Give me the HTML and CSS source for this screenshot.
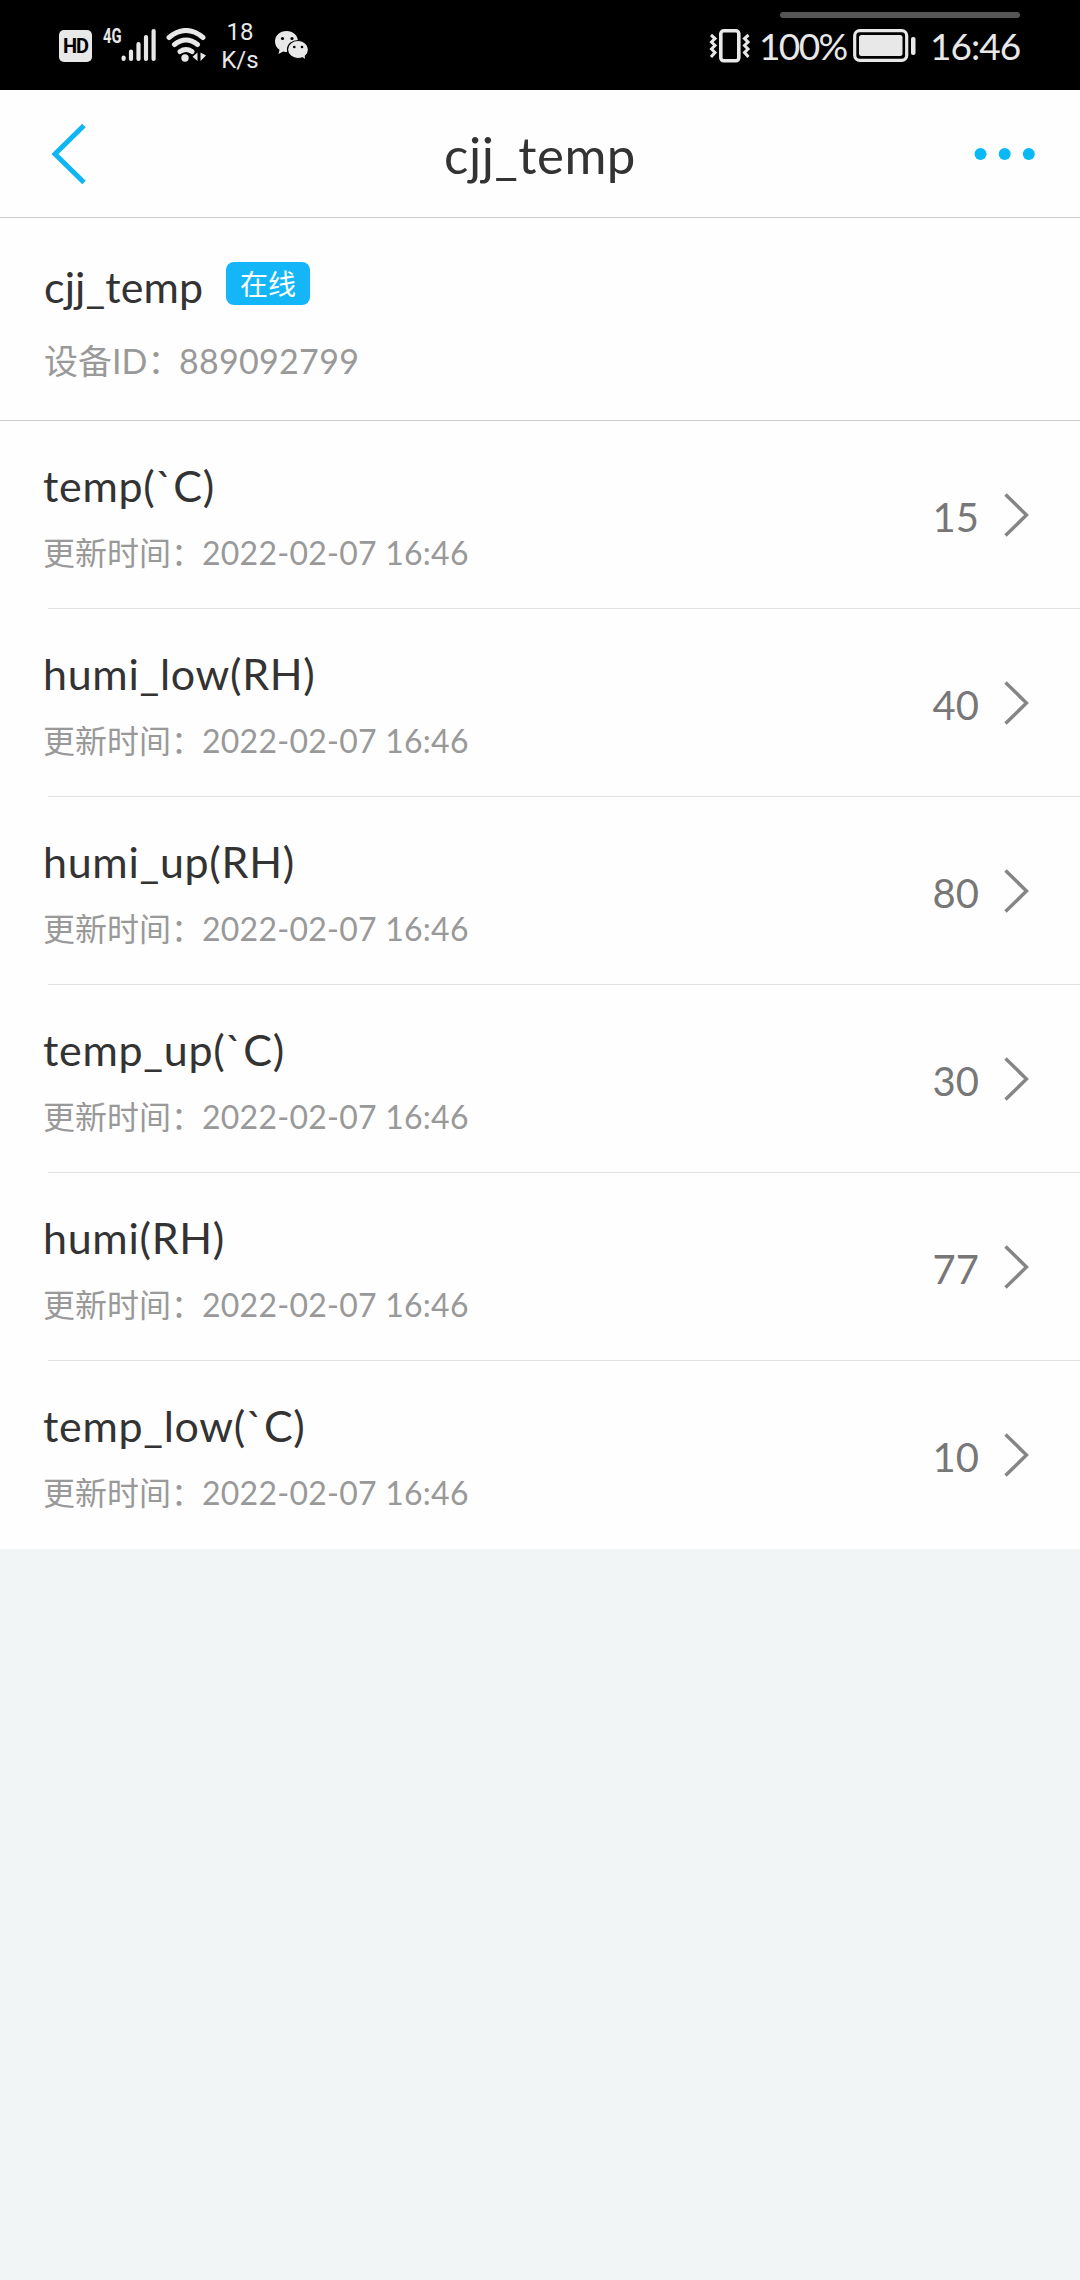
FILE: index.html
```html
<!DOCTYPE html>
<html lang="zh-CN">
<head>
<meta charset="utf-8">
<title>cjj_temp</title>
<link rel="stylesheet" href="styles.css">
</head>
<body>
<svg width="0" height="0" class="defs">
  <symbol id="chevron" viewBox="0 0 26 46"><path d="M2.500 2.500 23.500 23 2.500 43.500" fill="none" stroke="#858587" stroke-width="3.400"/></symbol>
</svg>
<div class="status">
  <div class="status-handle"></div>
  <div class="status-left">
    <span class="hd">HD</span>
    <span class="net">4G</span>
    <svg class="signal" width="36" height="34" viewBox="0 0 36 34" stroke="#e8e8e8" stroke-width="4.200" stroke-linecap="round"><path d="M2.600 29.500V31M10 23.500V31M17.500 16V31M25 9V31M32.600 3V31"/></svg>
    <svg class="wifi" width="42" height="36" viewBox="0 0 42 36"><g fill="none" stroke="#e8e8e8" stroke-width="5" stroke-linecap="round"><path d="M3 9.500Q20 -4.500 37 9.500M8.500 16.500Q20 7.500 31.500 16.500M14 23.500Q20 19.500 26 23.500"/></g><circle cx="19" cy="30" r="3.700" fill="#e8e8e8"/><path d="M31.500 24.500V33L26.500 28.800ZM34.500 24.500V33L40 27.500Z" fill="#e8e8e8"/></svg>
    <span class="speed">18<br>K/s</span>
    <svg class="wechat" width="34" height="30" viewBox="0 0 34 30"><path d="M11.500 0C5 0 0 4.600 0 10.500 0 14 1.700 16.800 4.500 18.800L3.500 23 8.200 20.500Q10 21 12 21C18 21 23 16.500 23 10.500 23 4.500 18 0 11.500 0Z" fill="#e8e8e8"/><path d="M23 9.500C17.500 9.500 12.500 13 12.500 18.500S17.500 27.500 23 27.500Q25.500 27.500 27.500 26.800L31 29 30.300 25.200C32.300 23.500 33.500 21 33.500 18.500 33.500 13 28.500 9.500 23 9.500Z" fill="#e8e8e8" stroke="#000" stroke-width="1.200"/><g><circle cx="7.500" cy="7.500" r="1.600"/><circle cx="17" cy="7.500" r="1.600"/><circle cx="19.300" cy="16" r="1.300"/><circle cx="27" cy="16" r="1.300"/></g></svg>
  </div>
  <div class="status-right">
    <svg class="vibrate" width="42" height="34" viewBox="0 0 42 34" fill="none" stroke="#e8e8e8"><rect x="11.800" y="1.800" width="18" height="30" rx="3" stroke-width="3.600"/><path d="M2 6 6 9.500 2.500 13 6 16.500 2.500 20 6 23.500 2 28M39.500 6 35.500 9.500 39 13 35.500 16.500 39 20 35.500 23.500 39.500 28" stroke-width="3"/></svg>
    <span class="percent">100%</span>
    <svg class="battery" width="64" height="34" viewBox="0 0 64 34"><rect x="1.700" y="1.700" width="52" height="29.600" rx="5" fill="none" stroke="#e8e8e8" stroke-width="3.200"/><rect x="6" y="6" width="43.500" height="21" rx="2.500" fill="#e8e8e8"/><rect x="58" y="8" width="4.500" height="18" rx="2" fill="#e8e8e8"/></svg>
    <span class="clock">16:46</span>
  </div>
</div>

<header class="nav">
  <svg width="36" height="62" viewBox="0 0 36 62"><path d="M33 2.500 4 31 33 59.500" fill="none" stroke="#10b6f3" stroke-width="5"/></svg>
  <h1>cjj_temp</h1>
  <svg width="62" height="12" viewBox="0 0 62 12" fill="#08b9f6"><circle cx="6.500" cy="6" r="6"/><circle cx="30.700" cy="6" r="6"/><circle cx="54.800" cy="6" r="6"/></svg>
</header>

<section class="device">
  <div class="device-head"><span class="device-name">cjj_temp</span><span class="badge">在线</span></div>
  <div class="device-id"><span class="id-label">设备ID：</span><span class="id-num">889092799</span></div>
</section>

<main class="list">
  <div class="row"><div class="info"><div class="name">temp(`C)</div><div class="time"><span class="label">更新时间：</span><span class="date">2022-02-07 16:46</span></div></div><span class="value">15</span><svg class="chev"><use href="#chevron"/></svg></div>
  <div class="row"><div class="info"><div class="name">humi_low(RH)</div><div class="time"><span class="label">更新时间：</span><span class="date">2022-02-07 16:46</span></div></div><span class="value">40</span><svg class="chev"><use href="#chevron"/></svg></div>
  <div class="row"><div class="info"><div class="name">humi_up(RH)</div><div class="time"><span class="label">更新时间：</span><span class="date">2022-02-07 16:46</span></div></div><span class="value">80</span><svg class="chev"><use href="#chevron"/></svg></div>
  <div class="row"><div class="info"><div class="name">temp_up(`C)</div><div class="time"><span class="label">更新时间：</span><span class="date">2022-02-07 16:46</span></div></div><span class="value">30</span><svg class="chev"><use href="#chevron"/></svg></div>
  <div class="row"><div class="info"><div class="name">humi(RH)</div><div class="time"><span class="label">更新时间：</span><span class="date">2022-02-07 16:46</span></div></div><span class="value">77</span><svg class="chev"><use href="#chevron"/></svg></div>
  <div class="row"><div class="info"><div class="name">temp_low(`C)</div><div class="time"><span class="label">更新时间：</span><span class="date">2022-02-07 16:46</span></div></div><span class="value">10</span><svg class="chev"><use href="#chevron"/></svg></div>
</main>
</body>
</html>
```
FILE: styles.css
```css
* { box-sizing: border-box; }
body {
  margin: 0;
  min-height: 2280px;
  background: #f2f5f5;
  font-family: Lato, "Noto Sans CJK SC", sans-serif;
  color: #333;
}
svg { display: block; flex: none; }
.defs { display: none; }

.status {
  position: relative;
  display: flex;
  justify-content: space-between;
  height: 90px;
  padding: 0 59px;
  background: #000;
  color: #e8e8e8;
}
.status-handle {
  position: absolute;
  left: 780px;
  top: 12px;
  width: 240px;
  height: 6px;
  border-radius: 3px;
  background: #555;
}
.status-left, .status-right { display: flex; align-items: flex-start; }
.hd {
  width: 33px;
  height: 32px;
  margin-top: 30px;
  border-radius: 5px;
  background: #e8e8e8;
  color: #000;
  font: bold 20px/33px Roboto, sans-serif;
  letter-spacing: -1px;
  text-align: center;
}
.net {
  width: 28px;
  margin: 26px 0 0 11px;
  font: bold 20px/20px Roboto, sans-serif;
  transform: scaleX(.74);
  transform-origin: left;
}
.signal { margin: 28px 0 0 -10px; }
.wifi { margin: 28px 0 0 9px; }
.speed {
  width: 44px;
  margin: 18px 0 0 10px;
  font: 24px/28px Roboto, sans-serif;
  text-align: center;
}
.wechat { margin: 31px 0 0 13px; }
.status-right { margin-right: 1px; }
.vibrate { margin-top: 29px; }
.percent, .clock { font-size: 37px; line-height: 44px; margin-top: 24px; white-space: nowrap; }
.percent { width: 88px; margin-left: 8px; letter-spacing: -1.6px; }
.battery { margin: 29px 0 0 6px; }
.clock { width: 90px; margin-left: 13px; letter-spacing: -1px; }

.nav {
  display: flex;
  justify-content: space-between;
  align-items: center;
  height: 128px;
  padding: 0 44px 0 51px;
  border-bottom: 1px solid #ccc;
  background: #fefefe;
}
.nav h1 {
  margin: 3px 0 0 19px;
  font-size: 51px;
  font-weight: 400;
  line-height: 60px;
  letter-spacing: .5px;
}

.device {
  height: 203px;
  padding: 40px 44px 0;
  border-bottom: 1px solid #ccc;
  background: #fefefe;
}
.device-head { display: flex; align-items: flex-start; height: 62px; }
.device-name {
  width: 182px;
  margin: -1px 0 0;
  font-size: 43px;
  line-height: 60px;
  letter-spacing: .1px;
}
.badge {
  width: 84px;
  height: 43px;
  margin-top: 4px;
  border-radius: 8px;
  background: #15b6f8;
  color: #fff;
  font: 28px/42px "Noto Sans CJK SC", sans-serif;
  text-align: center;
}
.device-id { display: flex; font-size: 34px; line-height: 50px; margin-top: 16px; color: #999; }
.id-label, .label { white-space: nowrap; font-feature-settings: "halt"; }
.id-label { width: 135px; }
.label { width: 159px; }
.id-num { letter-spacing: .3px; }

.list { background: #fefefe; }
.row {
  position: relative;
  display: flex;
  height: 188px;
  padding: 0 51px 0 43px;
}
.row:not(:last-child)::after {
  content: "";
  position: absolute;
  left: 48px;
  right: 0;
  bottom: 0;
  height: 1px;
  background: #e2e2e2;
}
.info { flex: 1; }
.name { margin-top: 35px; font-size: 43px; line-height: 60px; letter-spacing: .7px; }
.time { display: flex; margin-top: 13px; font-size: 32px; line-height: 48px; color: #999; }
.date { letter-spacing: .25px; }
.value { margin-top: 66px; font-size: 40px; line-height: 60px; color: #777; }
.chev { width: 26px; height: 46px; margin: 71px 0 0 24px; }
```
